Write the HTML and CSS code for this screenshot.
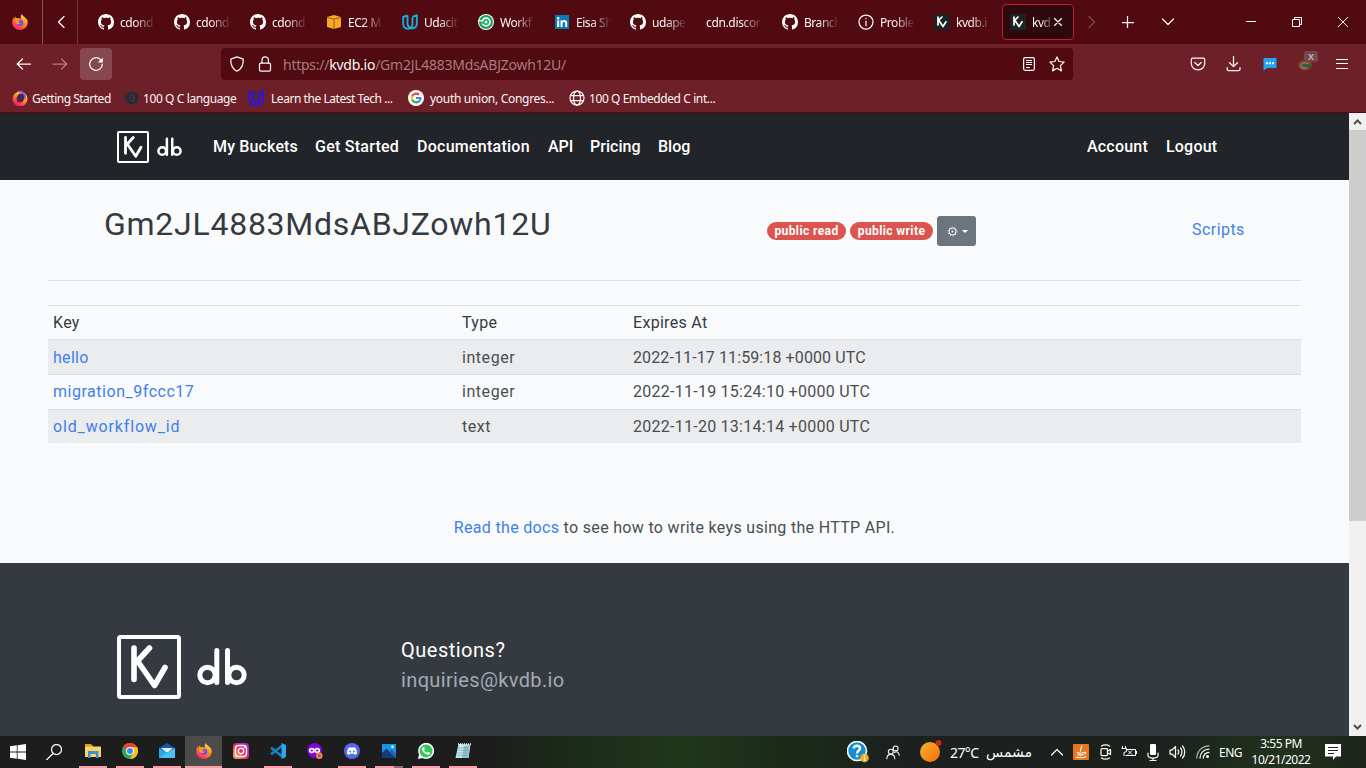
FILE: index.html
```html
<!DOCTYPE html>
<html lang="en">
<head>
<meta charset="utf-8">
<title>kvdb.io</title>
<link rel="stylesheet" href="styles.css">
</head>
<body>
<svg class="defs" aria-hidden="true">
  <defs>
    <linearGradient id="fire" x1=".8" y1="0" x2=".2" y2="1"><stop offset="0" stop-color="#ffe443"/><stop offset=".45" stop-color="#ff8a1c"/><stop offset="1" stop-color="#f51a74"/></linearGradient>
    <linearGradient id="insta" x1="1" y1="0" x2="0" y2="1"><stop offset="0" stop-color="#9028d8"/><stop offset=".5" stop-color="#ef2463"/><stop offset="1" stop-color="#ffc34e"/></linearGradient>
    <linearGradient id="sun" x1="0" y1="0" x2="1" y2="1"><stop offset="0" stop-color="#f5b332"/><stop offset="1" stop-color="#f96c08"/></linearGradient>
  </defs>
  <symbol id="github" viewBox="0 0 16 16"><path fill="#fff" d="M8 0C3.58 0 0 3.58 0 8c0 3.54 2.29 6.53 5.47 7.59.4.07.55-.17.55-.38 0-.19-.01-.82-.01-1.49-2.01.37-2.53-.49-2.69-.94-.09-.23-.48-.94-.82-1.13-.28-.15-.68-.52-.01-.53.63-.01 1.08.58 1.23.82.72 1.21 1.87.87 2.33.66.07-.52.28-.87.51-1.07-1.78-.2-3.64-.89-3.64-3.95 0-.87.31-1.59.82-2.15-.08-.2-.36-1.02.08-2.12 0 0 .67-.21 2.2.82.64-.18 1.32-.27 2-.27.68 0 1.36.09 2 .27 1.53-1.04 2.2-.82 2.2-.82.44 1.1.16 1.92.08 2.12.51.56.82 1.27.82 2.15 0 3.07-1.87 3.75-3.65 3.95.29.25.54.73.54 1.48 0 1.07-.01 1.93-.01 2.2 0 .21.15.46.55.38A8.01 8.01 0 0 0 16 8c0-4.42-3.58-8-8-8z"/></symbol>
  <symbol id="firefox" viewBox="0 0 16 16"><path fill="url(#fire)" d="M10 0c.2 1.2 1.1 1.800 2 2.600C12.400 3 12.700 3.300 13 3.700c.4.1.7.3.9.6C15.200 5.500 16 7.200 15.700 9c-.4 4-3.700 7-7.700 7-4.300 0-7.800-3.300-7.800-7.500C.2 6.500 1 4.500 2 3.300l.5 1.100 1.200-1.900.8 1.800c.7-.3 1.500-.3 2.200-.1L9 4.500C8.300 2.800 8.800 1 10 0z"/><circle cx="8" cy="8.700" r="3.300" fill="#7a4cf0"/><path fill="#ff9a1e" d="M3.500 5.500C5 4.500 7 5 7.800 6.300c-.3.700-1.300.8-2 1.400 1 .8 2 1.200 3.300.9C8 10 6 10.500 4.600 9.500 3.500 8.700 3 7 3.500 5.500z"/></symbol>
  <symbol id="udacity" viewBox="0 0 16 16"><path fill="none" stroke="currentColor" stroke-width="1.900" stroke-linejoin="round" d="M5.500 1.300 1.200 3v6.200c0 3.400 2 5.500 4.800 5.500s4.500-2 4.500-5V3.200M5.500 1.300v8.200c0 2 1 3.200 2.700 3.800M10.500 3l4.300-1.800v8.100c0 3.200-2 5.300-5.600 5.300"/></symbol>
  <symbol id="kv" viewBox="0 0 16 16"><path fill="#1c2225" d="M0 0h16v16H0z"/><path fill="none" stroke="#fff" stroke-width="1.700" stroke-linecap="round" stroke-linejoin="round" d="M4 3v8M8 3 4.800 6.200 9 12.500l3-4.700"/></symbol>
  <symbol id="kvdb" viewBox="0 0 131 64"><g fill="none" stroke="#fff" stroke-width="5" stroke-linecap="round" stroke-linejoin="round"><rect x="2" y="2" width="60" height="60" rx="1.500" stroke-width="4"/><path stroke-width="5.600" d="M17 13v31.500M32.500 13 20.500 26l17 24.500L48 32.500"/><circle cx="90.500" cy="40" r="7.700"/><circle cx="119.500" cy="40" r="7.700"/><path d="M99.800 15.500V47.500M110.500 15.500V47.500"/></g></symbol>
</svg>

<header class="browser">
  <div class="tabbar">
    <div class="home"><svg width="16" height="16"><use href="#firefox"/></svg></div>
    <div class="prev"><svg width="8" height="12" viewBox="0 0 8 12"><path class="ln" d="M7 .5 1.500 6 7 11.500"/></svg></div>
    <nav class="tabs">
      <div class="tab"><svg><use href="#github"/></svg><span>cdond</span></div>
      <div class="tab"><svg><use href="#github"/></svg><span>cdond</span></div>
      <div class="tab"><svg><use href="#github"/></svg><span>cdond</span></div>
      <div class="tab"><svg viewBox="0 0 16 16"><path fill="#f3ab26" d="M1 3 8 1l7 2v10l-7 2-7-2z"/><path fill="none" stroke="#7b3912" stroke-width=".7" d="m1 3.500 7 1.500 7-1.500M8 5v10"/></svg><span>EC2 M</span></div>
      <div class="tab cyan"><svg><use href="#udacity"/></svg><span>Udacit</span></div>
      <div class="tab"><svg viewBox="0 0 16 16"><circle cx="8" cy="8" r="8" fill="#fff"/><circle cx="8" cy="8" r="7" fill="#16a75c"/><circle cx="8" cy="8" r="3.900" fill="none" stroke="#fff" stroke-width="1.700"/><circle cx="8" cy="8" r="1.500" fill="#fff"/><path stroke="#16a75c" stroke-width="2" d="M2 8.500h4"/><path stroke="#fff" stroke-width="1.300" d="M.5 6.800h5"/></svg><span>Workf</span></div>
      <div class="tab"><svg viewBox="0 0 16 16"><path fill="#087bb7" d="M1 1h14v14H1z"/><g fill="#fff"><circle cx="4.200" cy="4.200" r="1.200"/><path d="M3.200 6.200h2V13h-2zM6.500 6.200h2v1c1-1.800 4.700-1.600 4.700 1.600V13h-2V9.500c0-2.300-2.600-2-2.600 0V13h-2.100z"/></g></svg><span>Eisa Sh</span></div>
      <div class="tab"><svg><use href="#github"/></svg><span>udape</span></div>
      <div class="tab wide"><span>cdn.discor</span></div>
      <div class="tab"><svg><use href="#github"/></svg><span>Branch</span></div>
      <div class="tab"><svg viewBox="0 0 16 16"><circle class="ln" cx="8" cy="8" r="7"/><path class="ln" d="M8 7v4.700M8 4.300v.4"/></svg><span>Proble</span></div>
      <div class="tab"><svg><use href="#kv"/></svg><span>kvdb.i</span></div>
      <div class="tab active"><svg><use href="#kv"/></svg><span>kvd</span><svg class="x" viewBox="0 0 8 8"><path class="ln" d="m.5.5 7 7m0-7-7 7"/></svg></div>
    </nav>
    <div class="tabtools">
      <svg width="8" height="12" viewBox="0 0 8 12" opacity=".25"><path class="ln" d="M1 .5 6.500 6 1 11.500"/></svg>
      <svg width="12" height="12" viewBox="0 0 12 12"><path class="ln" d="M5.500 0v12M0 6.500h12"/></svg>
      <svg width="12" height="8" viewBox="0 0 12 8"><path class="ln" d="m.5 1 5.500 5.500L11.500 1"/></svg>
    </div>
    <div class="wintools">
      <svg width="10" height="10" viewBox="0 0 10 10"><path class="thin" d="M0 4.500h10"/></svg>
      <svg width="10" height="10" viewBox="0 0 10 10"><path class="thin" d="M.5 2.500h7v7h-7zM2.500 2.500v-2h7v7h-2"/></svg>
      <svg width="10" height="10" viewBox="0 0 10 10"><path class="thin" d="m0 0 10 10M10 0 0 10"/></svg>
    </div>
  </div>

  <div class="toolbar">
    <div class="history">
      <svg width="16" height="14" viewBox="0 0 16 14"><path class="ln" d="M14.500 7H1.500M6.500 2 1.200 7l5.300 5"/></svg>
      <svg width="16" height="14" viewBox="0 0 16 14" opacity=".45"><path class="ln" d="M1 7h13.500M9.500 2l5.300 5-5.300 5"/></svg>
      <span class="reload"><svg width="16" height="16" viewBox="0 0 16 16"><path class="ln" d="M12.500 3.600A6.300 6.300 0 1 0 14.300 8"/><path fill="#fff" d="M14.800 1.500v5H9.800z"/></svg></span>
    </div>
    <div class="urlbar">
      <svg width="16" height="16" viewBox="0 0 16 16"><path class="ln" d="M8 .8 1.800 3.200c-.3 4.800 1 9.300 6.200 12 5.200-2.700 6.500-7.200 6.200-12z"/></svg>
      <svg class="lock" width="14" height="16" viewBox="0 0 14 16"><path class="ln" d="M4 7V4a3.200 3.200 0 0 1 6.400 0v3"/><rect class="ln" x="1.500" y="7" width="11" height="8" rx="1.300"/></svg>
      <span class="url">https://<b>kvdb.io</b>/Gm2JL4883MdsABJZowh12U/</span>
      <svg class="reader" width="14" height="14" viewBox="0 0 14 14"><rect class="ln" x="1.600" y=".7" width="10.800" height="12.600" rx="1.500"/><path class="thin" d="M4 3.500h6M4 5.500h6M4 7.500h6M4 10.500h4"/></svg>
      <svg width="16" height="16" viewBox="0 0 16 16"><path class="ln" d="m8 .9 2.100 4.600 5 .6-3.700 3.500 1 5.300L8 12.300l-4.400 2.600 1-5.300L.9 6.100l5-.6z"/></svg>
    </div>
    <div class="addons">
      <svg width="16" height="16" viewBox="0 0 16 16"><path class="ln" d="M2.700 2h10.600c.8 0 1.400.6 1.400 1.400V7.500C14.700 16 1.300 16 1.300 7.500V3.400C1.300 2.600 1.900 2 2.700 2zM4.800 6.500 8 9.500l3.200-3"/></svg>
      <svg width="16" height="16" viewBox="0 0 16 16"><path class="ln" d="M7.500 .5v10M3.500 6.700 7.500 10.500l4-3.800M1.200 11.500v1.800c0 .8.600 1.400 1.400 1.400h10c.8 0 1.400-.6 1.400-1.400v-1.800"/></svg>
      <svg width="16" height="16" viewBox="0 0 16 16"><path fill="#25a2f4" d="M1.500 2h13v10H5.500L1.500 14.500z"/><path fill="#fff" d="M4 6.300h2v2H4zM7 6.300h2v2H7zM10 6.300h2v2h-2z"/></svg>
      <span class="addon"><svg width="16" height="16" viewBox="0 0 16 16"><ellipse cx="7" cy="9" rx="6" ry="4.500" fill="none" stroke="#8b3c2c" stroke-width="2"/><ellipse cx="7" cy="9.500" rx="4" ry="2.700" fill="#37508c" stroke="#87833b" stroke-width="1.500"/><path fill="#365e24" d="m4 9 11-1-5 6-1-3z"/></svg><i class="badge">X</i></span>
      <svg class="menu" width="12" height="12" viewBox="0 0 12 12"><path class="thin" d="M0 1.500h12M0 5.500h12M0 10.500h12"/></svg>
    </div>
  </div>

  <div class="bookmarks">
    <span class="bm b1"><svg viewBox="0 0 16 16"><circle cx="8" cy="9" r="5.500" fill="none" stroke="url(#fire)" stroke-width="4"/><circle cx="9" cy="7" r="3.500" fill="#43215c"/><path fill="none" stroke="#8d4be0" stroke-width="1.800" d="M6 1.500c5-.8 8 3.500 6.500 7.500"/></svg><em>Getting Started</em></span>
    <span class="bm b2"><svg viewBox="0 0 16 16"><circle cx="9" cy="8" r="6.500" fill="#17313d"/><path fill="none" stroke="#4a2632" stroke-width="1.200" d="M1 5h4M0 8h4M1 11h4"/><circle cx="9" cy="9" r="2" fill="none" stroke="#75222b" stroke-width="1.200"/><path fill="none" stroke="#75222b" stroke-width="1.300" d="M7 5.500c2-1.200 4-.5 4 1.500v4.500"/></svg><em>100 Q C language</em></span>
    <span class="bm b3 blue"><svg><use href="#udacity"/></svg><em>Learn the Latest Tech ...</em></span>
    <span class="bm b4"><svg viewBox="0 0 16 16"><circle cx="8" cy="8" r="8" fill="#fff"/><g fill="none" stroke-width="2.200"><path stroke="#ea4335" d="M4.200 6A4.500 4.500 0 0 1 11 4.700"/><path stroke="#fbbc05" d="M4.200 10a4.500 4.500 0 0 1 0-4"/><path stroke="#34a853" d="M11 11.300A4.500 4.500 0 0 1 4.200 10"/><path stroke="#4285f4" d="M8 8h4.500c0 1.300-.5 2.500-1.500 3.300"/></g></svg><em>youth union, Congres...</em></span>
    <span class="bm b5"><svg viewBox="0 0 16 16"><g class="ln"><circle cx="8" cy="8" r="7"/><ellipse cx="8" cy="8" rx="3.500" ry="7"/><path d="M1.500 5.500h13M1.500 10.500h13"/></g></svg><em>100 Q Embedded C int...</em></span>
  </div>
</header>

<div class="viewport">
  <div class="site">
    <nav class="navbar">
      <svg class="brand" width="65.500" height="32"><use href="#kvdb"/></svg>
      <a class="n1">My Buckets</a><a class="n2">Get Started</a><a class="n3">Documentation</a><a class="n4">API</a><a class="n5">Pricing</a><a class="n6">Blog</a>
      <a class="n7">Account</a><a class="n8">Logout</a>
    </nav>
    <main>
      <section class="bucket">
        <h1>Gm2JL4883MdsABJZowh12U</h1>
        <div class="perms"><span class="pill">public read</span><span class="pill pw">public write</span><button class="gear"><svg width="11" height="11" viewBox="0 0 11 11"><circle cx="5.500" cy="5.500" r="3.500" fill="none" stroke="#fff"/><circle cx="5.500" cy="5.500" r="4.500" fill="none" stroke="#fff" stroke-width="1" stroke-dasharray="1 1.830"/><circle cx="5.500" cy="5.500" r="1" fill="#fff"/></svg><i></i></button></div>
        <a class="scripts">Scripts</a>
      </section>
      <table class="keys">
        <colgroup><col class="c1"><col class="c2"><col></colgroup>
        <tr class="head"><th>Key</th><th>Type</th><th>Expires At</th></tr>
        <tr class="odd first"><td><a>hello</a></td><td class="type">integer</td><td class="d1">2022-11-17 11:59:18 +0000 UTC</td></tr>
        <tr><td><a class="mig">migration_9fccc17</a></td><td class="type">integer</td><td class="d2">2022-11-19 15:24:10 +0000 UTC</td></tr>
        <tr class="odd last"><td><a class="old">old_workflow_id</a></td><td class="type">text</td><td class="d2">2022-11-20 13:14:14 +0000 UTC</td></tr>
      </table>
      <p class="docs"><a>Read the docs</a> to see how to write keys using the HTTP API.</p>
    </main>
    <footer class="footer">
      <svg width="131" height="64"><use href="#kvdb"/></svg>
      <div class="contact"><div class="q">Questions?</div><div class="mail">inquiries@kvdb.io</div></div>
    </footer>
  </div>
  <div class="scrollbar">
    <svg width="9" height="6" viewBox="0 0 9 6"><path d="M1 5 4.500 1.500 8 5"/></svg>
    <div class="thumb"></div>
    <svg class="down" width="9" height="6" viewBox="0 0 9 6"><path d="M1 1 4.500 4.500 8 1"/></svg>
  </div>
</div>

<div class="taskbar">
  <div class="apps">
    <span class="app"><svg viewBox="0 0 16 16"><path fill="#fff" d="m0 2.200 6.800-.9v6.300H0zM7.600 1.200 16 0v7.600H7.600zM0 8.400h6.800v6.300L0 13.800zM7.600 8.400H16V16l-8.400-1.200z"/></svg></span>
    <span class="app"><svg viewBox="0 0 16 16"><circle class="ln" cx="10.500" cy="5.500" r="5"/><path class="ln" d="M7 9.500.5 16"/></svg></span>
    <span class="app run"><svg viewBox="0 0 16 16"><path fill="#e39d10" d="M0 1h6l2 2v3H0z"/><path fill="#ffd264" d="M0 3.500h16V14H0z"/><path fill="#3b91d6" d="M3 8h10.500v7H11v-4H5.500v4H3z"/></svg></span>
    <span class="app run"><svg viewBox="0 0 16 16"><circle cx="8" cy="8" r="8" fill="#35a853"/><path fill="#ea4335" d="M8 8 1 4A8 8 0 0 1 15 4.200L8 4.500z"/><path fill="#fbc116" d="M8 16a8 8 0 0 0 7-12H8l3.500 6z"/><circle cx="8" cy="8" r="4" fill="#fff"/><circle cx="8" cy="8" r="3" fill="#4285f4"/></svg></span>
    <span class="app run"><svg viewBox="0 0 16 16"><path fill="#0c5aa8" d="m0 5 8-5 8 5v4H0z"/><path fill="#e8f2f8" d="m2 5 12 0-6 5z"/><path fill="#28a9ea" d="m0 5 8 5 8-5v10H0z"/><path fill="#45c4f5" d="m0 15 16-10v10z"/></svg></span>
    <span class="app run current"><svg><use href="#firefox"/></svg></span>
    <span class="app"><svg viewBox="0 0 16 16"><rect width="16" height="16" rx="3.500" fill="url(#insta)"/><g fill="none" stroke="#fff" stroke-width="1.400"><rect x="2.500" y="2.500" width="11" height="11" rx="3"/><circle cx="8" cy="8" r="2.700"/></g><circle cx="11.500" cy="4.500" r=".8" fill="#fff"/></svg></span>
    <span class="app run"><svg viewBox="0 0 16 16"><path fill="none" stroke="#1683cd" stroke-width="2.500" d="m1 4.800 11 8.500M1 11.200l11-8.500"/><path fill="#2aa8f2" d="m11.500 0 4.500 2v12l-4.500 2z"/></svg></span>
    <span class="app"><svg viewBox="0 0 16 16"><circle cx="7.500" cy="7.500" r="7.500" fill="#8304dd"/><g fill="none" stroke="#fff" stroke-width="1.700"><ellipse cx="4.800" cy="7.500" rx="2.100" ry="1.800"/><ellipse cx="10.200" cy="7.500" rx="2.100" ry="1.800"/></g><circle cx="12.300" cy="12.800" r="3.200" fill="#ff8840"/><circle cx="12.300" cy="12.800" r="1.300" fill="#7140cc"/></svg></span>
    <span class="app run"><svg viewBox="0 0 16 16"><circle cx="8" cy="8" r="8" fill="#5865f2"/><path fill="#fff" d="M4.700 4.700 6.800 4l.5.800h1.400l.5-.8 2.100.7c1.300 2 1.800 4 1.600 6L10.800 12l-.8-1.200H6L5.200 12l-2.100-1.300c-.2-2 .3-4 1.600-6z"/><circle cx="6.200" cy="8.500" r="1" fill="#5865f2"/><circle cx="9.800" cy="8.500" r="1" fill="#5865f2"/></svg></span>
    <span class="app run photos"><svg viewBox="0 0 16 16"><path fill="#1894e8" d="M1 1h14v14H1z"/><path fill="#123d7a" d="m1 10 4.500-4.500L15 15H1z"/><path fill="#1f63ab" d="m8.500 8.500 2-2L15 11v4z"/><circle cx="11.500" cy="3.800" r="1.200" fill="#fff"/></svg></span>
    <span class="app run"><svg viewBox="0 0 16 16"><path fill="#fff" d="m0 16 1-4.500A8 8 0 1 1 4.500 15z"/><circle cx="8" cy="8" r="6.500" fill="#34c759"/><path fill="#fff" d="M5.400 4c.8-.2 1.100 1 1.300 1.700.1.500-.6.900-.6 1.200.7 1.400 1.600 2.100 2.900 2.700.5 0 .8-1 1.200-.9l1.800 1c0 1.500-1.500 2.200-2.500 2C6.500 11 4 8.500 4 6c0-.9.700-1.900 1.400-2z"/></svg></span>
    <span class="app run"><svg viewBox="0 0 16 16"><path fill="#c7e8ef" d="m3.500 1 12 .5-2 13.500H.5z"/><path fill="#8fc3cf" d="m9 3 6-.5L13.500 15H7z"/><path stroke="#fff" stroke-width="1.500" stroke-dasharray="1 1" d="M3 1h13"/><path stroke="#558e9b" stroke-width=".5" d="M3 5h10M3 7.500h10M2.500 10H12M2 12.500h10"/></svg></span>
  </div>
  <div class="tray">
    <svg class="t-help" width="22" height="22" viewBox="0 0 22 22"><circle cx="10" cy="10" r="9.500" fill="#168fd0" stroke="#fff" stroke-width="1.600"/><path fill="none" stroke="#fff" stroke-width="2.400" d="M6.800 7.500C7 3.800 13.200 4 13 7.500c0 2.200-3 2.200-3 5M10 14v2.300"/><circle cx="17.500" cy="17" r="4.300" fill="#f0ad24"/><path stroke="#fff" stroke-width="1.300" d="M17.500 16v4m0-6v1"/></svg>
    <svg class="t-people" width="14" height="15" viewBox="0 0 16 16"><g class="ln"><circle cx="5.500" cy="7" r="2.800"/><circle cx="11" cy="3.300" r="2.800"/><path d="M1 15c0-6.500 9-6.500 9 0M9.500 8c3-2 5.500 0 5.500 3"/></g></svg>
    <svg class="t-sun" width="23" height="22" viewBox="0 0 23 22"><circle cx="10" cy="12" r="10" fill="url(#sun)"/><circle cx="18.500" cy="3" r="3" fill="#c42b1c"/></svg>
    <span class="temp">27°C</span><span class="ar" dir="rtl">مشمس</span>
    <svg class="t-up" width="12" height="8" viewBox="0 0 12 8"><path class="ln" d="m.5 7 5.500-5.500L11.500 7"/></svg>
    <svg class="t-java" width="16" height="16" viewBox="0 0 16 16"><rect width="16" height="16" rx="1" fill="#e77620"/><g fill="none" stroke="#fff" stroke-width="1.100"><path d="M8.500 1.500c2 2-3 3.500-.5 6M4 8.500c2 .8 5 .8 7 0M4.500 10.500c2 .8 4 .8 6 0M3 13c3 1 7 1 10-.5M11 8.300c2-.5 2.500 1 .5 2"/></g></svg>
    <svg class="t-cam" width="12" height="16" viewBox="0 0 12 16"><g class="ln"><rect x="1" y="4.500" width="6.500" height="7" rx="1"/><path d="m7.500 7 3-1.500v5L7.500 9M1.500 2c2-1.500 6-1.500 8 0M1.500 14c2 1.500 6 1.500 8 0"/></g></svg>
    <svg class="t-bat" width="16" height="12" viewBox="0 0 16 12"><path class="thin" d="M1.500 0v2.500M4.500 0v2.500M.5 2.500h5v3L3 6.500V10M6 3.500h8.500v6h-10M15.500 5v3M7 4.500l4 4m0-4-4 4"/></svg>
    <svg class="t-mic" width="12" height="17" viewBox="0 0 12 17"><rect x="3" width="6" height="11" rx="1.200" fill="#fff"/><path class="ln" d="M1 9v2.500c0 2 1.500 2.500 5 2.500s5-.5 5-2.500V9M6 14v2.500M3 16.500h6"/></svg>
    <svg class="t-vol" width="17" height="14" viewBox="0 0 17 14"><path class="ln" d="M1 5h2l3.500-3.500v11L3 9H1zM9 5c1 1 1 3 0 4M11.500 3c2 2 2 6 0 8M13.500 1c3 3 3 9 0 12"/></svg>
    <svg class="t-net" width="14" height="14" viewBox="0 0 14 14"><g class="ln"><path opacity=".7" d="M.8 13C1 6 6 1 13 .8"/><path d="M4 13c0-5 4-9 9-9M7.300 13c0-3 2.500-5.700 5.700-5.700"/></g><circle cx="11.500" cy="11.500" r="1.500" fill="#fff"/></svg>
    <span class="eng">ENG</span>
    <div class="clock"><span>3:55 PM</span><span class="day">10/21/2022</span></div>
    <svg class="t-note" width="16" height="16" viewBox="0 0 16 16"><path fill="#fff" d="M0 0h16v12.500h-5L8 16v-3.500H0z"/><path stroke="#222" d="M3 3.500h10M3 6.500h10M3 9.500h6"/></svg>
  </div>
</div>
</body>
</html>
```
FILE: styles.css
```css
* { box-sizing: border-box; }
body { margin: 0; width: 1366px; height: 768px; overflow: hidden; font-family: Roboto, sans-serif; display: flex; flex-direction: column; }
svg { display: block; flex: none; }
.defs { position: absolute; width: 0; height: 0; }
.ln { fill: none; stroke: #fbf5f6; stroke-width: 1.25; stroke-linecap: round; stroke-linejoin: round; }
.thin { fill: none; stroke: #fff; stroke-width: 1; }

/* Browser chrome */
.browser { height: 113px; flex: none; background: #6e2028; border-bottom: 1px solid #510a10; color: #fbf5f6; font-family: "Noto Sans", sans-serif; font-size: 12px; }
.tabbar { height: 44px; background: #510a10; display: flex; align-items: center; }
.home { width: 43px; height: 44px; display: flex; align-items: center; padding-left: 12px; border-right: 1px solid #84545a; }
.prev { width: 35px; height: 44px; display: flex; align-items: center; padding-left: 14px; border-right: 1px solid #74373e; }
.tabs { display: flex; width: 996px; padding-left: 12px; }
.tab { width: 76px; height: 36px; display: flex; align-items: center; padding-left: 8px; gap: 6px; flex: none; }
.tab svg { width: 16px; height: 16px; }
.tab span { width: 36px; white-space: nowrap; letter-spacing: -.45px; line-height: 18px; padding-top: 1px; -webkit-mask-image: linear-gradient(90deg, #000 40%, transparent 98%); mask-image: linear-gradient(90deg, #000 40%, transparent 98%); }
.tab.wide span { width: 58px; letter-spacing: -.35px; -webkit-mask-image: linear-gradient(90deg, #000 60%, transparent 98%); mask-image: linear-gradient(90deg, #000 60%, transparent 98%); }
.cyan svg { color: #14b1df; }
.blue svg { color: #2117e8; }
.tab.active { width: 72px; padding-left: 7px; background: #2d080d; border: 1px solid #c01d32; border-radius: 4px; }
.tab.active span { width: 22px; }
.tab.active .x { width: 8px; height: 8px; margin-left: -6px; }
.tabtools { display: flex; align-items: center; width: 146px; padding-left: 14px; }
.tabtools svg:nth-child(2) { margin-left: 26px; }
.tabtools svg:nth-child(3) { margin-left: 28px; }
.wintools { display: flex; gap: 36px; padding-left: 26px; }
.toolbar { height: 40px; display: flex; align-items: center; }
.history { display: flex; align-items: center; width: 221px; padding-left: 16px; gap: 20px; }
.reload { width: 32px; height: 32px; margin-left: -8px; border-radius: 4px; background: #87474e; display: flex; align-items: center; justify-content: center; }
.urlbar { width: 852px; height: 32px; background: #510a10; border-radius: 4px; display: flex; align-items: center; padding: 0 8px; gap: 12px; }
.lock { margin-left: 1px; }
.url { flex: 1; font-size: 14px; line-height: 20px; margin: 2px 0 0 -1px; color: #a77b80; letter-spacing: -.25px; }
.reader { margin-right: 1px; }
.url b { font-weight: 400; color: #fbf5f6; }
.addons { display: flex; align-items: center; padding-left: 117px; gap: 20px; }
.addon { position: relative; }
.badge { position: absolute; left: 6px; top: -5px; width: 14px; height: 11px; background: #75464d; color: #c9a9ae; border-radius: 2px; font: 700 9px/11px "Noto Sans", sans-serif; text-align: center; }
.menu { margin-left: 2px; }
.bookmarks { height: 28px; display: flex; align-items: center; padding-left: 12px; }
.bm { display: flex; align-items: center; gap: 4px; white-space: nowrap; letter-spacing: -.4px; }
.bm svg { width: 16px; height: 16px; }
.bm em { font-style: normal; }
.b1 { width: 111px; letter-spacing: -.5px; } .b2 { width: 125px; } .b3 { width: 160px; gap: 7px; letter-spacing: -.45px; } .b4 { width: 161px; gap: 6px; letter-spacing: -.3px; }

/* Page */
.viewport { height: 623px; display: flex; flex: none; }
.site { width: 1349px; background: #f8fafc; color: #4a4e53; font-size: 16px; }
.navbar { height: 67px; background: #212529; color: #fff; display: flex; align-items: center; padding-left: 117px; font-weight: 500; }
.brand { margin-right: 30.5px; margin-top: 1px; }
.navbar a { margin-right: 16px; white-space: nowrap; flex: none; }
.n1 { width: 86px; letter-spacing: .15px; } .n2 { width: 86px; letter-spacing: .25px; } .n3 { width: 115px; letter-spacing: .25px; }
.n4 { width: 26px; } .n5 { width: 52px; letter-spacing: .05px; } .n6 { width: 33px; }
.navbar .n7 { width: 63px; margin-left: 380px; letter-spacing: .2px; } .n8 { letter-spacing: .2px; }
main { height: 383px; padding: 0 48px; }
.bucket { height: 101px; border-bottom: 1px solid #dce0e5; display: flex; }
h1 { margin: 0; padding: 25px 0 0 56px; width: 719px; font-size: 32px; line-height: 38px; font-weight: 400; color: #343a40; letter-spacing: .74px; }
.perms { width: 425px; padding-top: 36px; display: flex; align-items: flex-start; }
.pill { width: 79px; height: 18px; margin: 6px 4px 0 0; border-radius: 9px; background: #dc5450; color: #fff; font-weight: 700; font-size: 12px; line-height: 18px; text-align: center; white-space: nowrap; letter-spacing: .4px; }
.pw { width: 83px; }
.gear { width: 39px; height: 30px; border: 0; border-radius: 3px; background: #6c757d; display: flex; align-items: center; padding: 0 0 0 10px; gap: 4px; }
.gear i { border: 3px solid transparent; border-top-color: #fff; border-bottom: 0; }
a { color: #3f80ea; }
.navbar a { color: #fff; }
.scripts { padding-top: 40px; line-height: 19px; letter-spacing: .45px; }
.keys { margin-top: 24px; width: 1253px; table-layout: fixed; border-collapse: separate; border-spacing: 0; letter-spacing: .3px; }
.c1 { width: 409px; } .c2 { width: 171px; }
th, td { height: 35px; padding: 0 5px; border-top: 1px solid #dce0e5; text-align: left; font-weight: 400; line-height: 24px; }
.head th { height: 34px; color: #343a40; }
.odd td { background: #eaeced; }
.first td { padding-top: 2px; }
.last td { height: 34px; }
.type { letter-spacing: .55px; }
.mig { letter-spacing: .52px; }
.old { letter-spacing: .85px; }
.d1 { letter-spacing: .11px; }
.d2 { letter-spacing: .26px; }
.docs { margin: 0; padding-top: 73px; text-align: center; line-height: 24px; letter-spacing: .32px; }
.footer { height: 173px; background: #353a40; display: flex; padding: 72px 0 0 117px; font-size: 20px; line-height: 30px; }
.contact { padding-left: 153px; letter-spacing: .36px; }
.q { color: #fff; letter-spacing: .5px; }
.mail { color: #a2abb3; }
.scrollbar { width: 17px; background: #f0f0f0; display: flex; flex-direction: column; align-items: center; padding: 6px 0; }
.scrollbar path { fill: none; stroke: #505050; stroke-width: 2; }
.thumb { width: 17px; height: 391px; margin-top: 5px; background: #cdcdcd; }
.down { margin-top: auto; }

/* Taskbar */
.taskbar { height: 32px; flex: none; display: flex; color: #fff; font-family: "Noto Sans", sans-serif; background: linear-gradient(90deg, #1d1d1d 0, #1d1d1d 36%, #1b2a19 41%, #20371a 50%, #1b2b18 57%, #1c211f 66%, #1b211d 85%, #22321e 94%, #1d231b); }
.apps { display: flex; width: 847px; }
.app { width: 37px; height: 32px; display: flex; align-items: center; justify-content: center; position: relative; flex: none; }
.app svg { width: 16px; height: 16px; margin-top: -2px; }
.app:first-child { width: 36px; } .app:first-child svg { margin-top: 0; }
.app:nth-child(2) { width: 38px; }
.app:nth-child(2) svg { margin: 0 2px 0 0; }
.run::after { content: ""; position: absolute; left: 5px; right: 4px; bottom: 0; height: 2px; background: #fc9fa9; }
.current { background: #4b4b4b; }
.current::after { left: 0; right: 0; }
.photos::after { background: linear-gradient(90deg, #fc9fa9 68%, #946970 68%); }
.tray { display: flex; align-items: center; font-size: 12px; }
.t-people { margin-left: 17px; }
.t-sun { margin-left: 20px; margin-top: -3px; }
.temp { margin-left: 7px; width: 38px; font-size: 14px; letter-spacing: -.6px; }
.ar { width: 44px; font: 14px "DejaVu Sans", sans-serif; text-align: left; direction: rtl; }
.t-up { margin-left: 19px; } .t-java { margin-left: 10px; } .t-cam { margin-left: 11px; } .t-bat { margin-left: 9px; } .t-mic { margin-left: 10px; } .t-vol { margin-left: 10px; } .t-net { margin-left: 10px; }
.eng { margin-left: 9px; width: 25px; letter-spacing: -.5px; }
.clock { width: 58px; margin-left: 8px; display: flex; flex-direction: column; align-items: center; line-height: 16px; letter-spacing: -.5px; }
.t-note { margin-left: 15px; }
```
